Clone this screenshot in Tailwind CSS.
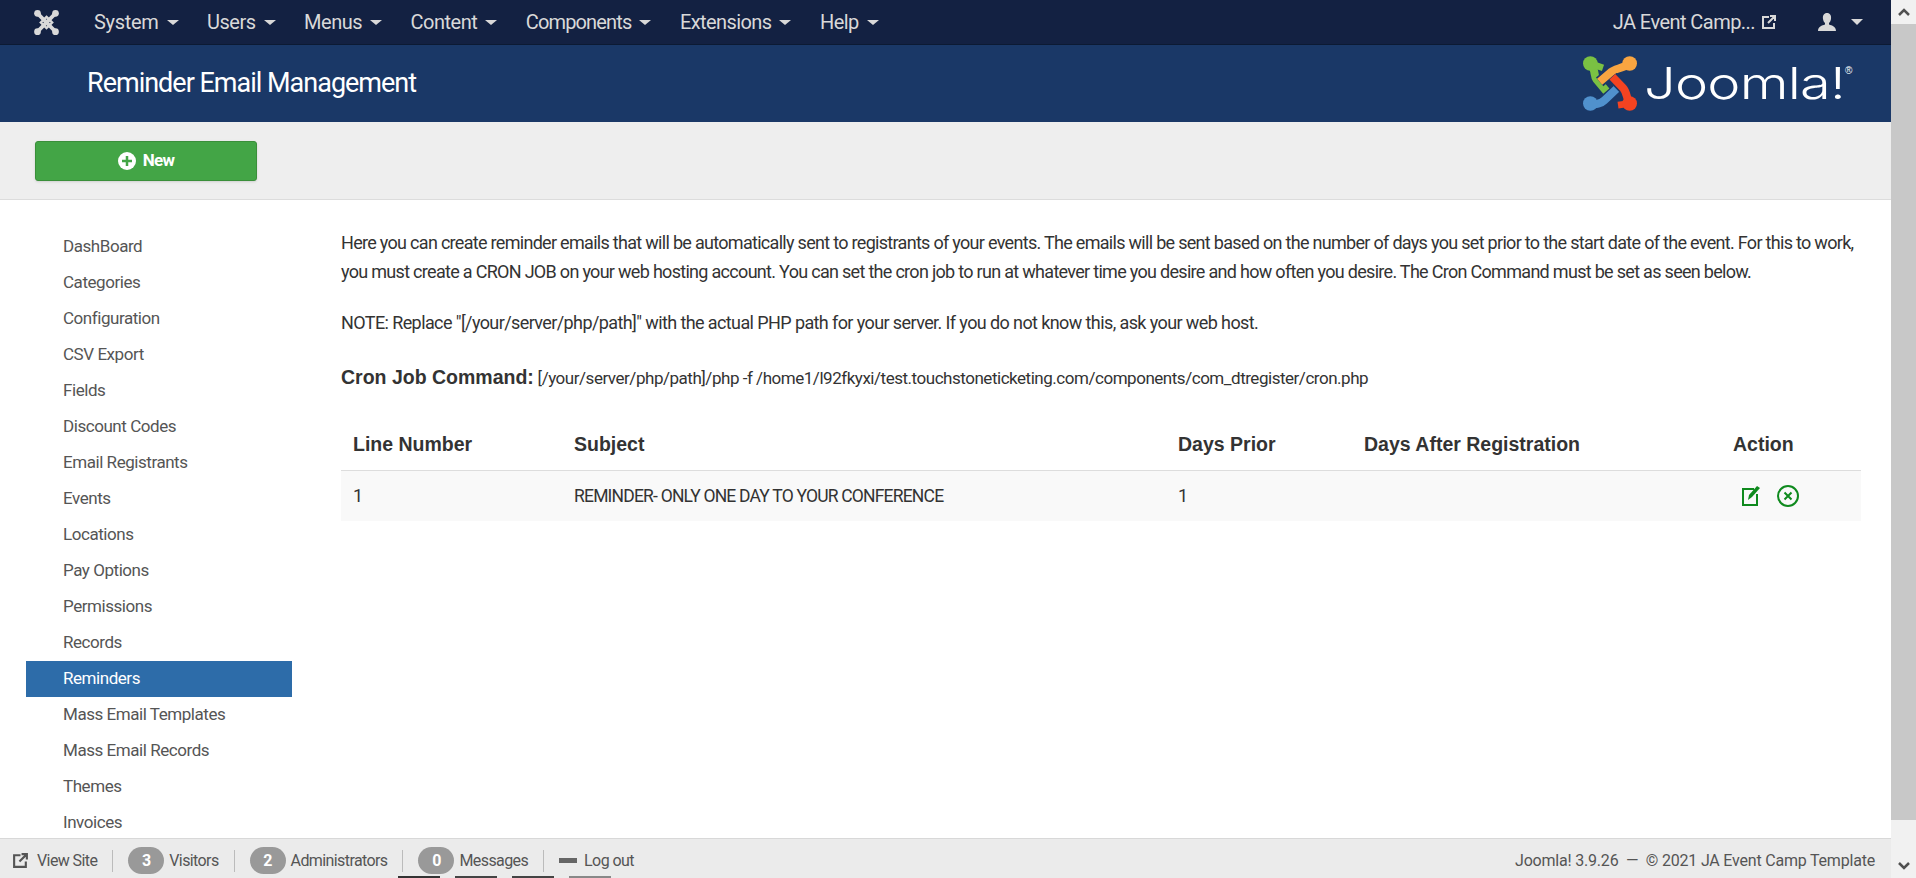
<!doctype html>
<html>
<head>
  <meta charset="UTF-8">
  <script src="https://cdn.jsdelivr.net/npm/@tailwindcss/browser@4"></script>
</head>
<body class="h-[878px] overflow-hidden bg-white font-['Roboto',sans-serif] text-[18px] tracking-[-0.6px] text-[#333]">
<div class="flex h-[878px]">
  <div class="flex min-w-0 flex-1 flex-col">
    <!-- top menu -->
    <nav class="flex h-[45px] shrink-0 items-center border-b border-[#0c1a33] bg-[#132142] pr-[28px] text-[#d9d9d9]">
      <svg class="ml-[34px] mr-[35px] h-[25px] w-[25px]" viewBox="40 23 162 164" fill="none">
        <g stroke="#d9d9d9" stroke-width="24">
          <path d="M62 45L180 165M180 45L62 165"/>
          <path d="M121 68L158 105L121 142L84 105z" stroke-width="16"/>
        </g>
        <g fill="#d9d9d9"><circle cx="62" cy="45" r="22"/><circle cx="180" cy="45" r="22"/><circle cx="180" cy="165" r="22"/><circle cx="62" cy="165" r="22"/></g>
      </svg>
      <div class="flex items-center gap-[28.5px] text-[20px] tracking-[-0.5px]">
        <span class="flex items-center gap-[8px] tracking-[-0.3px]">System <i class="h-0 w-0 border-x-[6px] border-t-[5px] border-x-transparent border-t-[#d9d9d9]"></i></span>
        <span class="flex items-center gap-[8px]">Users <i class="h-0 w-0 border-x-[6px] border-t-[5px] border-x-transparent border-t-[#d9d9d9]"></i></span>
        <span class="flex items-center gap-[8px]">Menus <i class="h-0 w-0 border-x-[6px] border-t-[5px] border-x-transparent border-t-[#d9d9d9]"></i></span>
        <span class="flex items-center gap-[8px]">Content <i class="h-0 w-0 border-x-[6px] border-t-[5px] border-x-transparent border-t-[#d9d9d9]"></i></span>
        <span class="flex items-center gap-[8px] tracking-[-0.85px]">Components <i class="h-0 w-0 border-x-[6px] border-t-[5px] border-x-transparent border-t-[#d9d9d9]"></i></span>
        <span class="flex items-center gap-[8px] tracking-[-0.6px]">Extensions <i class="h-0 w-0 border-x-[6px] border-t-[5px] border-x-transparent border-t-[#d9d9d9]"></i></span>
        <span class="flex items-center gap-[8px]">Help <i class="h-0 w-0 border-x-[6px] border-t-[5px] border-x-transparent border-t-[#d9d9d9]"></i></span>
      </div>
      <div class="ml-auto flex items-center text-[20px] tracking-[-0.55px]">
        <span>JA Event Camp...</span>
        <svg class="ml-[6px] h-[16px] w-[16px]" viewBox="0 0 16 16" fill="none" stroke="#d9d9d9" stroke-width="2"><path d="M8 3H2v11h11V9M9 2h5v5M14 2L7 9"/></svg>
        <svg class="ml-[40px] h-[20px] w-[20px]" viewBox="0 0 20 20" fill="#d9d9d9"><path d="M10 1c3 0 4.500 2.500 4 6-.3 2-1 3-2 4v1.500c3 1 7 2 7 6.500H1c0-4.500 4-5.500 7-6.500V11c-1-1-1.700-2-2-4-.5-3.500 1-6 4-6z"/></svg>
        <i class="ml-[14px] h-0 w-0 border-x-[6px] border-t-[6px] border-x-transparent border-t-[#d9d9d9]"></i>
      </div>
    </nav>
    <!-- title bar -->
    <header class="flex h-[77px] shrink-0 items-center justify-between bg-[#1a3867] pl-[87px] pr-[37px] text-white">
      <h1 class="text-[27px] leading-none tracking-[-1px]">Reminder Email Management</h1>
      <div class="flex items-center">
        <svg class="h-[55px] w-[54px]" viewBox="40 23 162 164" fill="none">
          <path d="M62 165C78 170 95 165 105 155L150 112" stroke="#5091cd" stroke-width="24"/>
          <path d="M62 45C78 60 72 82 80 92L110 128" stroke="#1a3867" stroke-width="34"/>
          <path d="M62 45C78 60 72 82 80 92L110 128" stroke="#7ac143" stroke-width="24"/>
          <path d="M62 45L100 58" stroke="#7ac143" stroke-width="20"/>
          <path d="M180 45C160 60 135 60 125 70L90 100" stroke="#1a3867" stroke-width="34"/>
          <path d="M180 45C160 60 135 60 125 70L90 100" stroke="#f9a541" stroke-width="24"/>
          <path d="M180 165C170 150 172 130 160 118L128 85" stroke="#1a3867" stroke-width="34"/>
          <path d="M180 165C170 150 172 130 160 118L128 85" stroke="#f44321" stroke-width="24"/>
          <path d="M180 165L145 170" stroke="#f44321" stroke-width="20"/>
          <circle cx="62" cy="45" r="22" fill="#7ac143"/><circle cx="180" cy="45" r="22" fill="#f9a541"/>
          <circle cx="180" cy="165" r="22" fill="#f44321"/><circle cx="62" cy="165" r="22" fill="#5091cd"/>
        </svg>
        <svg class="ml-[11px] h-[55px] w-[206px] overflow-visible" viewBox="0 0 206 55">
          <text x="-4" y="43" textLength="201" lengthAdjust="spacingAndGlyphs" fill="#fff" font-family="Inter" font-weight="300" font-size="44">Joomla!</text>
          <text x="197" y="18" fill="#fff" font-family="Liberation Sans" font-size="10">®</text>
        </svg>
      </div>
    </header>
    <!-- toolbar -->
    <div class="flex h-[78px] shrink-0 items-center border-b border-[#dcdcdc] bg-[#eeeeee] pl-[35px]">
      <button class="flex h-[40px] w-[222px] items-center justify-center gap-[7px] rounded-[3px] border border-[#3a8f3a] bg-[#43a546] text-[17px] font-bold tracking-[-0.7px] text-white shadow-sm">
        <svg class="h-[18px] w-[18px]" viewBox="0 0 18 18"><circle cx="9" cy="9" r="9" fill="#fff"/><path d="M9 4v10M4 9h10" stroke="#43a546" stroke-width="2.5"/></svg>
        New
      </button>
    </div>
    <div class="flex min-h-0 flex-1">
      <!-- sidebar -->
      <aside class="w-[341px] shrink-0 overflow-hidden pl-[26px] pt-[29px]">
        <ul class="w-[266px] text-[17px] tracking-[-0.45px] text-[#555]">
          <li class="flex h-[36px] items-center pl-[37px]">DashBoard</li>
          <li class="flex h-[36px] items-center pl-[37px]">Categories</li>
          <li class="flex h-[36px] items-center pl-[37px]">Configuration</li>
          <li class="flex h-[36px] items-center pl-[37px]">CSV Export</li>
          <li class="flex h-[36px] items-center pl-[37px]">Fields</li>
          <li class="flex h-[36px] items-center pl-[37px]">Discount Codes</li>
          <li class="flex h-[36px] items-center pl-[37px]">Email Registrants</li>
          <li class="flex h-[36px] items-center pl-[37px]">Events</li>
          <li class="flex h-[36px] items-center pl-[37px]">Locations</li>
          <li class="flex h-[36px] items-center pl-[37px]">Pay Options</li>
          <li class="flex h-[36px] items-center pl-[37px]">Permissions</li>
          <li class="flex h-[36px] items-center pl-[37px]">Records</li>
          <li class="flex h-[36px] items-center bg-[#2d6ca9] pl-[37px] text-white">Reminders</li>
          <li class="flex h-[36px] items-center pl-[37px]">Mass Email Templates</li>
          <li class="flex h-[36px] items-center pl-[37px]">Mass Email Records</li>
          <li class="flex h-[36px] items-center pl-[37px]">Themes</li>
          <li class="flex h-[36px] items-center pl-[37px]">Invoices</li>
        </ul>
      </aside>
      <!-- content -->
      <main class="min-w-0 flex-1 pr-[30px] pt-[28px]">
        <p class="leading-[29px] tracking-[-0.7px]">Here you can create reminder emails that will be automatically sent to registrants of your events. The emails will be sent based on the number of days you set prior to the start date of the event. For this to work, you must create a CRON JOB on your web hosting account. You can set the cron job to run at whatever time you desire and how often you desire. The Cron Command must be set as seen below.</p>
        <p class="mt-[22px] leading-[29px]">NOTE: Replace "[/your/server/php/path]" with the actual PHP path for your server. If you do not know this, ask your web host.</p>
        <p class="mt-[26px] text-[17px] leading-[29px] tracking-[-0.47px]"><b class="font-['Liberation_Sans',sans-serif] text-[19.5px] tracking-normal">Cron Job Command:</b> [/your/server/php/path]/php -f /home1/l92fkyxi/test.touchstoneticketing.com/components/com_dtregister/cron.php</p>
        <table class="mt-[26px] w-full table-fixed border-collapse text-left">
          <thead>
            <tr class="h-[51px] border-b border-[#dddddd] font-['Liberation_Sans',sans-serif] text-[19.5px] tracking-normal">
              <th class="w-[233px] pl-[12px] font-bold">Line Number</th>
              <th class="w-[604px] pl-0 font-bold">Subject</th>
              <th class="w-[186px] font-bold">Days Prior</th>
              <th class="w-[369px] font-bold">Days After Registration</th>
              <th class="font-bold">Action</th>
            </tr>
          </thead>
          <tbody>
            <tr class="h-[51px] bg-[#f9f9f9]">
              <td class="pl-[12px]">1</td>
              <td class="text-[17.5px] tracking-[-0.8px]">REMINDER- ONLY ONE DAY TO YOUR CONFERENCE</td>
              <td>1</td>
              <td></td>
              <td>
                <div class="flex items-center gap-[16px] pl-[8px]">
                  <svg class="h-[23px] w-[20px]" viewBox="0 0 20 23" fill="none" stroke="#0f8a1e" stroke-width="2"><path d="M13 5H2v16h14V10"/><path d="M7 16l1-5 8-9 3 2-8 9z" fill="#0f8a1e" stroke="none"/></svg>
                  <svg class="h-[22px] w-[22px]" viewBox="0 0 22 22" fill="none" stroke="#0f8a1e" stroke-width="2"><circle cx="11" cy="11" r="10"/><path d="M7.500 7.500l7 7M14.500 7.500l-7 7"/></svg>
                </div>
              </td>
            </tr>
          </tbody>
        </table>
      </main>
    </div>
    <!-- status bar -->
    <footer class="relative flex h-[40px] shrink-0 items-center border-t border-[#d8d8d8] bg-[#ebebeb] pl-[12px] pr-[16px] pt-[4px] text-[16px] tracking-[-0.6px] text-[#555]">
      <svg class="mr-[8px] h-[17px] w-[17px]" viewBox="0 0 16 16" fill="none" stroke="#555" stroke-width="2"><path d="M8 3H2v11h11V9M9 2h5v5M14 2L7 9"/></svg>
      <span>View Site</span>
      <i class="mx-[15px] h-[22px] w-px bg-[#bbb]"></i>
      <span class="mr-[5px] flex h-[27px] w-[36px] items-center justify-center rounded-full bg-[#999] font-bold text-white">3</span>
      <span>Visitors</span>
      <i class="mx-[15px] h-[22px] w-px bg-[#bbb]"></i>
      <span class="mr-[5px] flex h-[27px] w-[36px] items-center justify-center rounded-full bg-[#999] font-bold text-white">2</span>
      <span>Administrators</span>
      <i class="mx-[15px] h-[22px] w-px bg-[#bbb]"></i>
      <span class="mr-[5px] flex h-[27px] w-[36px] items-center justify-center rounded-full bg-[#999] font-bold text-white">0</span>
      <span>Messages</span>
      <i class="mx-[15px] h-[22px] w-px bg-[#bbb]"></i>
      <i class="mr-[7px] h-[5px] w-[18px] bg-[#666]"></i>
      <span>Log out</span>
      <span class="ml-auto tracking-[-0.2px]">Joomla! 3.9.26 &nbsp;— &nbsp;© 2021 JA Event Camp Template</span>
      <div class="absolute bottom-0 left-[398px] flex gap-[15px]">
        <i class="h-[2px] w-[42px] bg-[#333]"></i><i class="h-[2px] w-[42px] bg-[#444]"></i><i class="h-[2px] w-[42px] bg-[#444]"></i><i class="h-[2px] w-[42px] bg-[#888]"></i>
      </div>
    </footer>
  </div>
  <!-- scrollbar -->
  <div class="flex w-[25px] shrink-0 flex-col bg-[#f1f1f1]">
    <div class="flex h-[24px] items-center justify-center">
      <svg class="h-[10px] w-[14px]" viewBox="0 0 14 10" fill="none" stroke="#505050" stroke-width="2.5"><path d="M2 8l5-5 5 5"/></svg>
    </div>
    <div class="h-[796px] bg-[#c8c8c8]"></div>
    <div class="mt-auto flex h-[24px] items-center justify-center">
      <svg class="h-[10px] w-[14px]" viewBox="0 0 14 10" fill="none" stroke="#505050" stroke-width="2.5"><path d="M2 2l5 5 5-5"/></svg>
    </div>
  </div>
</div>
</body>
</html>
